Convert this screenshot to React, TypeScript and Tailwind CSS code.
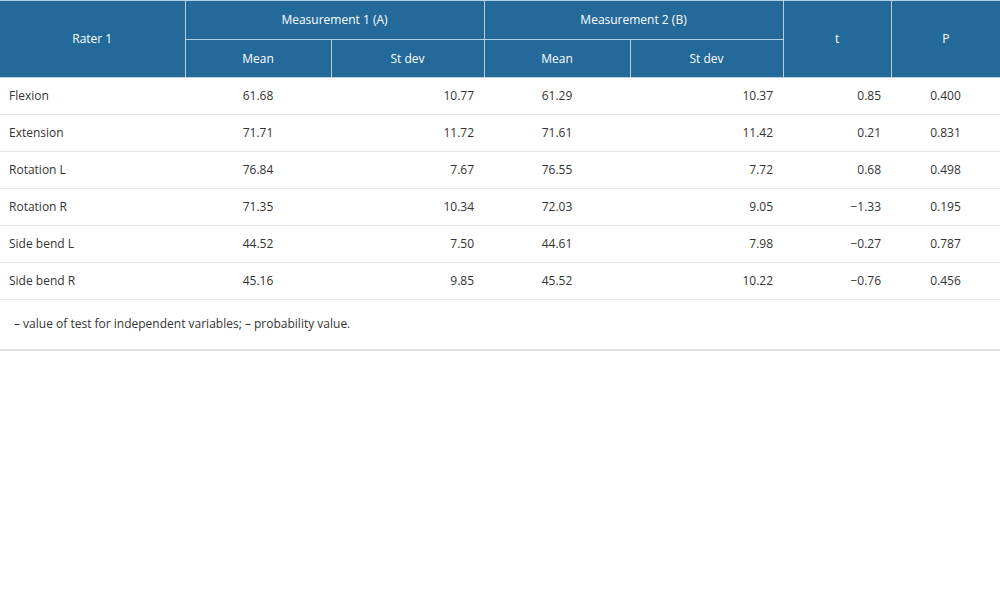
const rows = [
  ["Flexion", "61.68", "10.77", "61.29", "10.37", "0.85", "0.400"],
  ["Extension", "71.71", "11.72", "71.61", "11.42", "0.21", "0.831"],
  ["Rotation L", "76.84", "7.67", "76.55", "7.72", "0.68", "0.498"],
  ["Rotation R", "71.35", "10.34", "72.03", "9.05", "−1.33", "0.195"],
  ["Side bend L", "44.52", "7.50", "44.61", "7.98", "−0.27", "0.787"],
  ["Side bend R", "45.16", "9.85", "45.52", "10.22", "−0.76", "0.456"],
];

export default function App() {
  const th = "border border-[#b9cfe0] font-normal px-2";
  return (
    <div className="w-[1000px] h-[600px] bg-white text-[12px] text-[#333]" style={{ fontFamily: '"Open Sans", sans-serif' }}>
      <table className="w-[1000px] table-fixed border-collapse">
        <colgroup>
          <col className="w-[185px]" />
          <col className="w-[146px]" />
          <col className="w-[153px]" />
          <col className="w-[146px]" />
          <col className="w-[153px]" />
          <col className="w-[108px]" />
          <col className="w-[109px]" />
        </colgroup>
        <thead className="bg-[#23699a] text-white">
          <tr className="h-[39px]">
            <th rowSpan={2} className={th + " border-l-0"}>Rater 1</th>
            <th colSpan={2} className={th}>Measurement 1 (A)</th>
            <th colSpan={2} className={th}>Measurement 2 (B)</th>
            <th rowSpan={2} className={th}>t</th>
            <th rowSpan={2} className={th + " border-r-0"}>P</th>
          </tr>
          <tr className="h-[38px]">
            <th className={th}>Mean</th>
            <th className={th}>St dev</th>
            <th className={th}>Mean</th>
            <th className={th}>St dev</th>
          </tr>
        </thead>
        <tbody>
          {rows.map((r) => (
            <tr key={r[0]} className="h-[37px] border-b border-[#e3e3e3]">
              <td className="pl-[9px]">{r[0]}</td>
              <td className="text-center">{r[1]}</td>
              <td className="text-right pr-[10px]">{r[2]}</td>
              <td className="text-center">{r[3]}</td>
              <td className="text-right pr-[10px]">{r[4]}</td>
              <td className="text-right pr-[10px]">{r[5]}</td>
              <td className="text-center">{r[6]}</td>
            </tr>
          ))}
          <tr className="h-[50px] border-b-2 border-[#e0e0e0]">
            <td colSpan={7} className="pl-[14px]">– value of test for independent variables; – probability value.</td>
          </tr>
        </tbody>
      </table>
    </div>
  );
}
